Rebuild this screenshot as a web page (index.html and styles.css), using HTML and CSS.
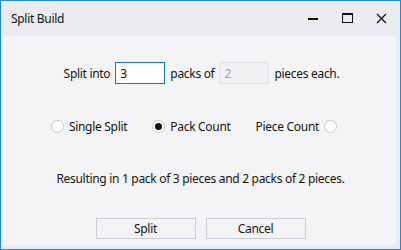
FILE: index.html
```html
<!DOCTYPE html>
<html>
<head>
<meta charset="utf-8">
<link rel="stylesheet" href="styles.css">
</head>
<body>
<div class="window">
  <div class="titlebar">
    <div class="title">Split Build</div>
    <div class="controls">
      <div class="ctl"><svg width="11" height="11" viewBox="0 0 11 11"><rect x="0" y="5" width="10" height="2" fill="#111"/></svg></div>
      <div class="ctl"><svg width="11" height="11" viewBox="0 0 11 11"><rect x="0.5" y="0.5" width="10" height="9" fill="none" stroke="#111" stroke-width="1"/><rect x="0" y="0" width="11" height="2" fill="#111"/></svg></div>
      <div class="ctl"><svg width="11" height="11" viewBox="0 0 11 11"><path d="M1 1 L10 10 M10 1 L1 10" stroke="#111" stroke-width="1.3" fill="none"/></svg></div>
    </div>
  </div>
  <div class="content">
    <div class="row-split">
      <span class="lbl">Split into</span>
      <div class="input active">3</div>
      <span class="lbl">packs of</span>
      <div class="input disabled">2</div>
      <span class="lbl">pieces each.</span>
    </div>
    <div class="row-radio">
      <div class="opt"><span class="radio"></span><span>Single Split</span></div>
      <div class="opt"><span class="radio checked"></span><span>Pack Count</span></div>
      <div class="opt"><span>Piece Count</span><span class="radio"></span></div>
    </div>
    <div class="result">Resulting in 1 pack of 3 pieces and 2 packs of 2 pieces.</div>
    <div class="buttons">
      <div class="btn">Split</div>
      <div class="btn">Cancel</div>
    </div>
  </div>
</div>
</body>
</html>
```
FILE: styles.css
```css
* { box-sizing: border-box; }
html, body { margin: 0; padding: 0; }
body {
  width: 401px;
  height: 250px;
  overflow: hidden;
  font-family: "Noto Sans", "Open Sans", sans-serif;
  font-size: 12px;
  letter-spacing: -0.3px;
  color: #161616;
}
.window {
  width: 401px;
  height: 250px;
  border: 1px solid #2b86d8;
  background: #ececf0;
  display: flex;
  flex-direction: column;
}
.titlebar {
  height: 35px;
  display: flex;
  align-items: center;
  justify-content: space-between;
  padding-left: 10px;
  padding-right: 2px;
  flex: none;
}
.title { color: #111; }
.controls { display: flex; height: 100%; }
.ctl {
  width: 34px;
  height: 100%;
  display: flex;
  align-items: center;
  justify-content: center;
}
.ctl svg { display: block; }
.content {
  flex: 1;
  margin: 0 4px 3px 2px;
  background: #f4f4f7;
  display: flex;
  flex-direction: column;
  align-items: center;
}
.row-split {
  margin-top: 26px;
  height: 22px;
  display: flex;
  align-items: center;
  gap: 5px;
  padding-left: 4px;
}
.input {
  width: 50px;
  height: 22px;
  padding: 0 4px;
  display: flex;
  align-items: center;
  background: #fff;
  border: 1px solid #d8d8de;
}
.input.active { border-color: #0a78d4; color: #111; }
.input.disabled { background: #f1f1f3; border-color: #e3e3e8; color: #a2a2a8; }
.row-radio {
  margin-top: 34px;
  height: 16px;
  display: flex;
  align-items: center;
  gap: 25px;
  padding-right: 11px;
}
.opt { display: flex; align-items: center; gap: 5px; }
.radio {
  width: 13px;
  height: 13px;
  border-radius: 50%;
  border: 1px solid #c9c9d1;
  background: #fff;
  display: flex;
  align-items: center;
  justify-content: center;
}
.radio.checked::after {
  content: "";
  width: 7px;
  height: 7px;
  border-radius: 50%;
  background: #111;
}
.result {
  margin-top: 37px;
  height: 16px;
  line-height: 16px;
  padding-left: 2px;
}
.buttons {
  margin-top: 31px;
  display: flex;
  gap: 10px;
  padding-left: 2px;
}
.btn {
  width: 100px;
  height: 21px;
  border: 1px solid #cdcdd6;
  background: #f4f4f7;
  display: flex;
  align-items: center;
  justify-content: center;
}
```
